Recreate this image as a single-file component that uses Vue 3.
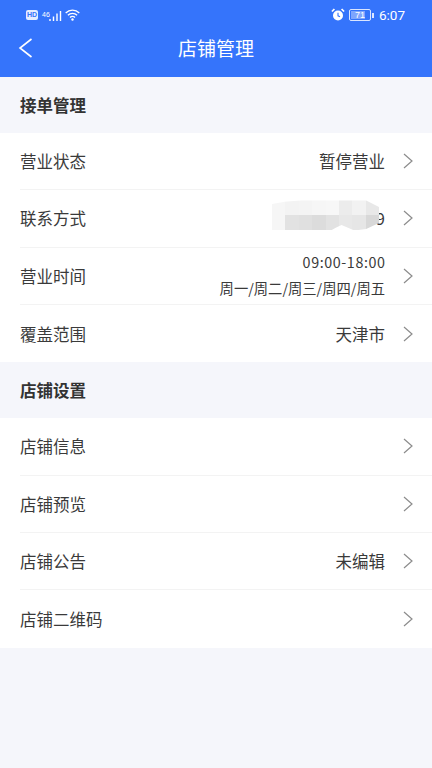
<script setup>
const group1 = [
  { label: '营业状态', value: '暂停营业' },
  { label: '联系方式', blurred: true },
  { label: '营业时间', lines: ['09:00-18:00', '周一/周二/周三/周四/周五'] },
  { label: '覆盖范围', value: '天津市' }
]
const group2 = [
  { label: '店铺信息' },
  { label: '店铺预览' },
  { label: '店铺公告', value: '未编辑' },
  { label: '店铺二维码' }
]
const sections = [
  { title: '接单管理', items: group1 },
  { title: '店铺设置', items: group2 }
]
const mosaic = [
  '#f6f6f6','#f3f3f3','#f4f4f4','#f6f6f6','#f7f7f7','#ececec','#f2f2f2','#e8e8e8',
  '#f6f6f6','#e2e2e2','#e0e0e0','#dcdcdc','#e2e2e2','#e8e8e8','#e6e6e6','#d8d8d8'
]
</script>

<template>
  <div class="page">
    <header class="top">
      <div class="status">
        <div class="status-left">
          <span class="hd">HD</span>
          <span class="net">46</span>
          <svg class="signal" width="13" height="11" viewBox="0 0 13 11"><path d="M1 9v2M4.500 6.500V11M8 3.500V11M11.500 1v10" stroke="#fff" stroke-width="1.400" fill="none"/></svg>
          <svg class="wifi" width="15" height="12" viewBox="0 0 15 12"><path d="M.7 4a9.500 9.500 0 0 1 13.600 0M2.900 6.300a6.400 6.400 0 0 1 9.200 0M5 8.500a3.400 3.400 0 0 1 5 0" stroke="#fff" stroke-width="1.300" fill="none"/><circle cx="7.500" cy="10.500" r="1.200" fill="#fff"/></svg>
        </div>
        <div class="status-right">
          <svg width="14" height="14" viewBox="0 0 14 14"><circle cx="7" cy="7.500" r="5" fill="#fff"/><path d="M7 4.800v3l2 1" stroke="#3574fb" stroke-width="1.100" fill="none"/><path d="M.9 3.500 3.400 1M13.100 3.500 10.600 1" stroke="#fff" stroke-width="1.700"/></svg>
          <span class="battery"><span class="battery-fill"></span><span class="battery-num">71</span></span>
          <span class="battery-tip"></span>
          <span class="clock">6:07</span>
        </div>
      </div>
      <div class="nav">
        <svg class="back" width="15" height="20" viewBox="0 0 15 20"><path d="M13.500 1 2 10l11.500 9" stroke="#fff" stroke-width="1.600" fill="none"/></svg>
        <span class="title">店铺管理</span>
      </div>
    </header>

    <section v-for="s in sections" :key="s.title">
      <h2 class="sec">{{ s.title }}</h2>
      <ul class="list">
        <li v-for="it in s.items" :key="it.label" class="row">
          <span class="label">{{ it.label }}</span>
          <span v-if="it.value" class="value">{{ it.value }}</span>
          <span v-else-if="it.lines" class="lines">
            <span class="time">{{ it.lines[0] }}</span>
            <span>{{ it.lines[1] }}</span>
          </span>
          <span v-else-if="it.blurred" class="value blurred">
            9
            <span class="mosaic"><i v-for="(c, i) in mosaic" :key="i" :style="{ background: c }"></i></span>
          </span>
          <svg class="chev" width="10" height="16" viewBox="0 0 10 16"><path d="M1 1l8 7-8 7" stroke="#8c8c8c" stroke-width="1.200" fill="none"/></svg>
        </li>
      </ul>
    </section>
  </div>
</template>

<style>
html, body { margin: 0; background: #f5f6fb; }
</style>
<style scoped>
.page { width: 432px; min-height: 768px; background: #f5f6fb; font-family: "Noto Sans CJK SC", "Noto Sans", sans-serif; color: #3a3a3a; }
.top { height: 77px; background: #3574fb; color: #fff; display: flex; flex-direction: column; }
.status { height: 30px; display: flex; justify-content: space-between; align-items: center; padding: 0 27px 0 26px; }
.status-left, .status-right { display: flex; align-items: center; }
.hd { width: 12px; height: 10px; background: #e6eeff; color: #3574fb; font: 700 7px/10px "Liberation Sans", sans-serif; text-align: center; border-radius: 2px; margin-right: 4px; }
.net { font: 7px/8px "Liberation Sans", sans-serif; align-self: flex-start; margin-top: 2px; }
.signal { margin: 0 3px 0 -1px; }
.battery { position: relative; margin-left: 4px; width: 20px; height: 10px; border: 1px solid #dbe6ff; border-radius: 2px; display: block; }
.battery-fill { position: absolute; left: 1px; top: 1px; bottom: 1px; width: 14px; background: #7fa6fd; }
.battery-num { position: absolute; inset: 0; text-align: center; font: 9px/10px "Liberation Sans", sans-serif; }
.battery-tip { width: 2px; height: 5px; background: #dbe6ff; margin: 0 5px 0 1px; }
.clock { font: 13.500px/16px Roboto, sans-serif; }
.nav { position: relative; display: flex; justify-content: center; padding-top: 5px; }
.back { position: absolute; left: 18px; top: 8px; }
.title { font-size: 19px; line-height: 26px; font-weight: 400; }
.sec { margin: 0; height: 56px; padding-left: 20px; font-size: 16.500px; font-weight: 700; line-height: 56px; color: #333; }
.list { margin: 0; padding: 0 0 0 20px; list-style: none; background: #fff; }
.row { box-sizing: border-box; height: 57.330px; display: flex; align-items: center; padding-right: 19px; border-bottom: 1px solid #f3f3f3; }
.row:last-child { border-bottom: 0; }
.label { font-size: 16.500px; flex: 1; }
.value { font-size: 16.500px; }
.lines { display: flex; flex-direction: column; align-items: flex-end; font-size: 14.300px; line-height: 26px; height: 52px; margin-top: -1px; }
.lines > span { display: block; height: 26px; }
.time { letter-spacing: 0.600px; margin-right: -0.600px; }
.chev { margin-left: 18px; }
.blurred { position: relative; width: 113px; text-align: right; }
.mosaic { position: absolute; left: 0; top: -6px; width: 107px; height: 30px; display: grid; grid-template-columns: repeat(8, 1fr); grid-template-rows: 1fr 1fr; clip-path: polygon(0 12%, 12% 4%, 27% 0, 88% 0, 100% 22%, 100% 75%, 88% 95%, 77% 100%, 65% 82%, 60% 90%, 55% 100%, 0 100%); }
.mosaic i { display: block; }
</style>
